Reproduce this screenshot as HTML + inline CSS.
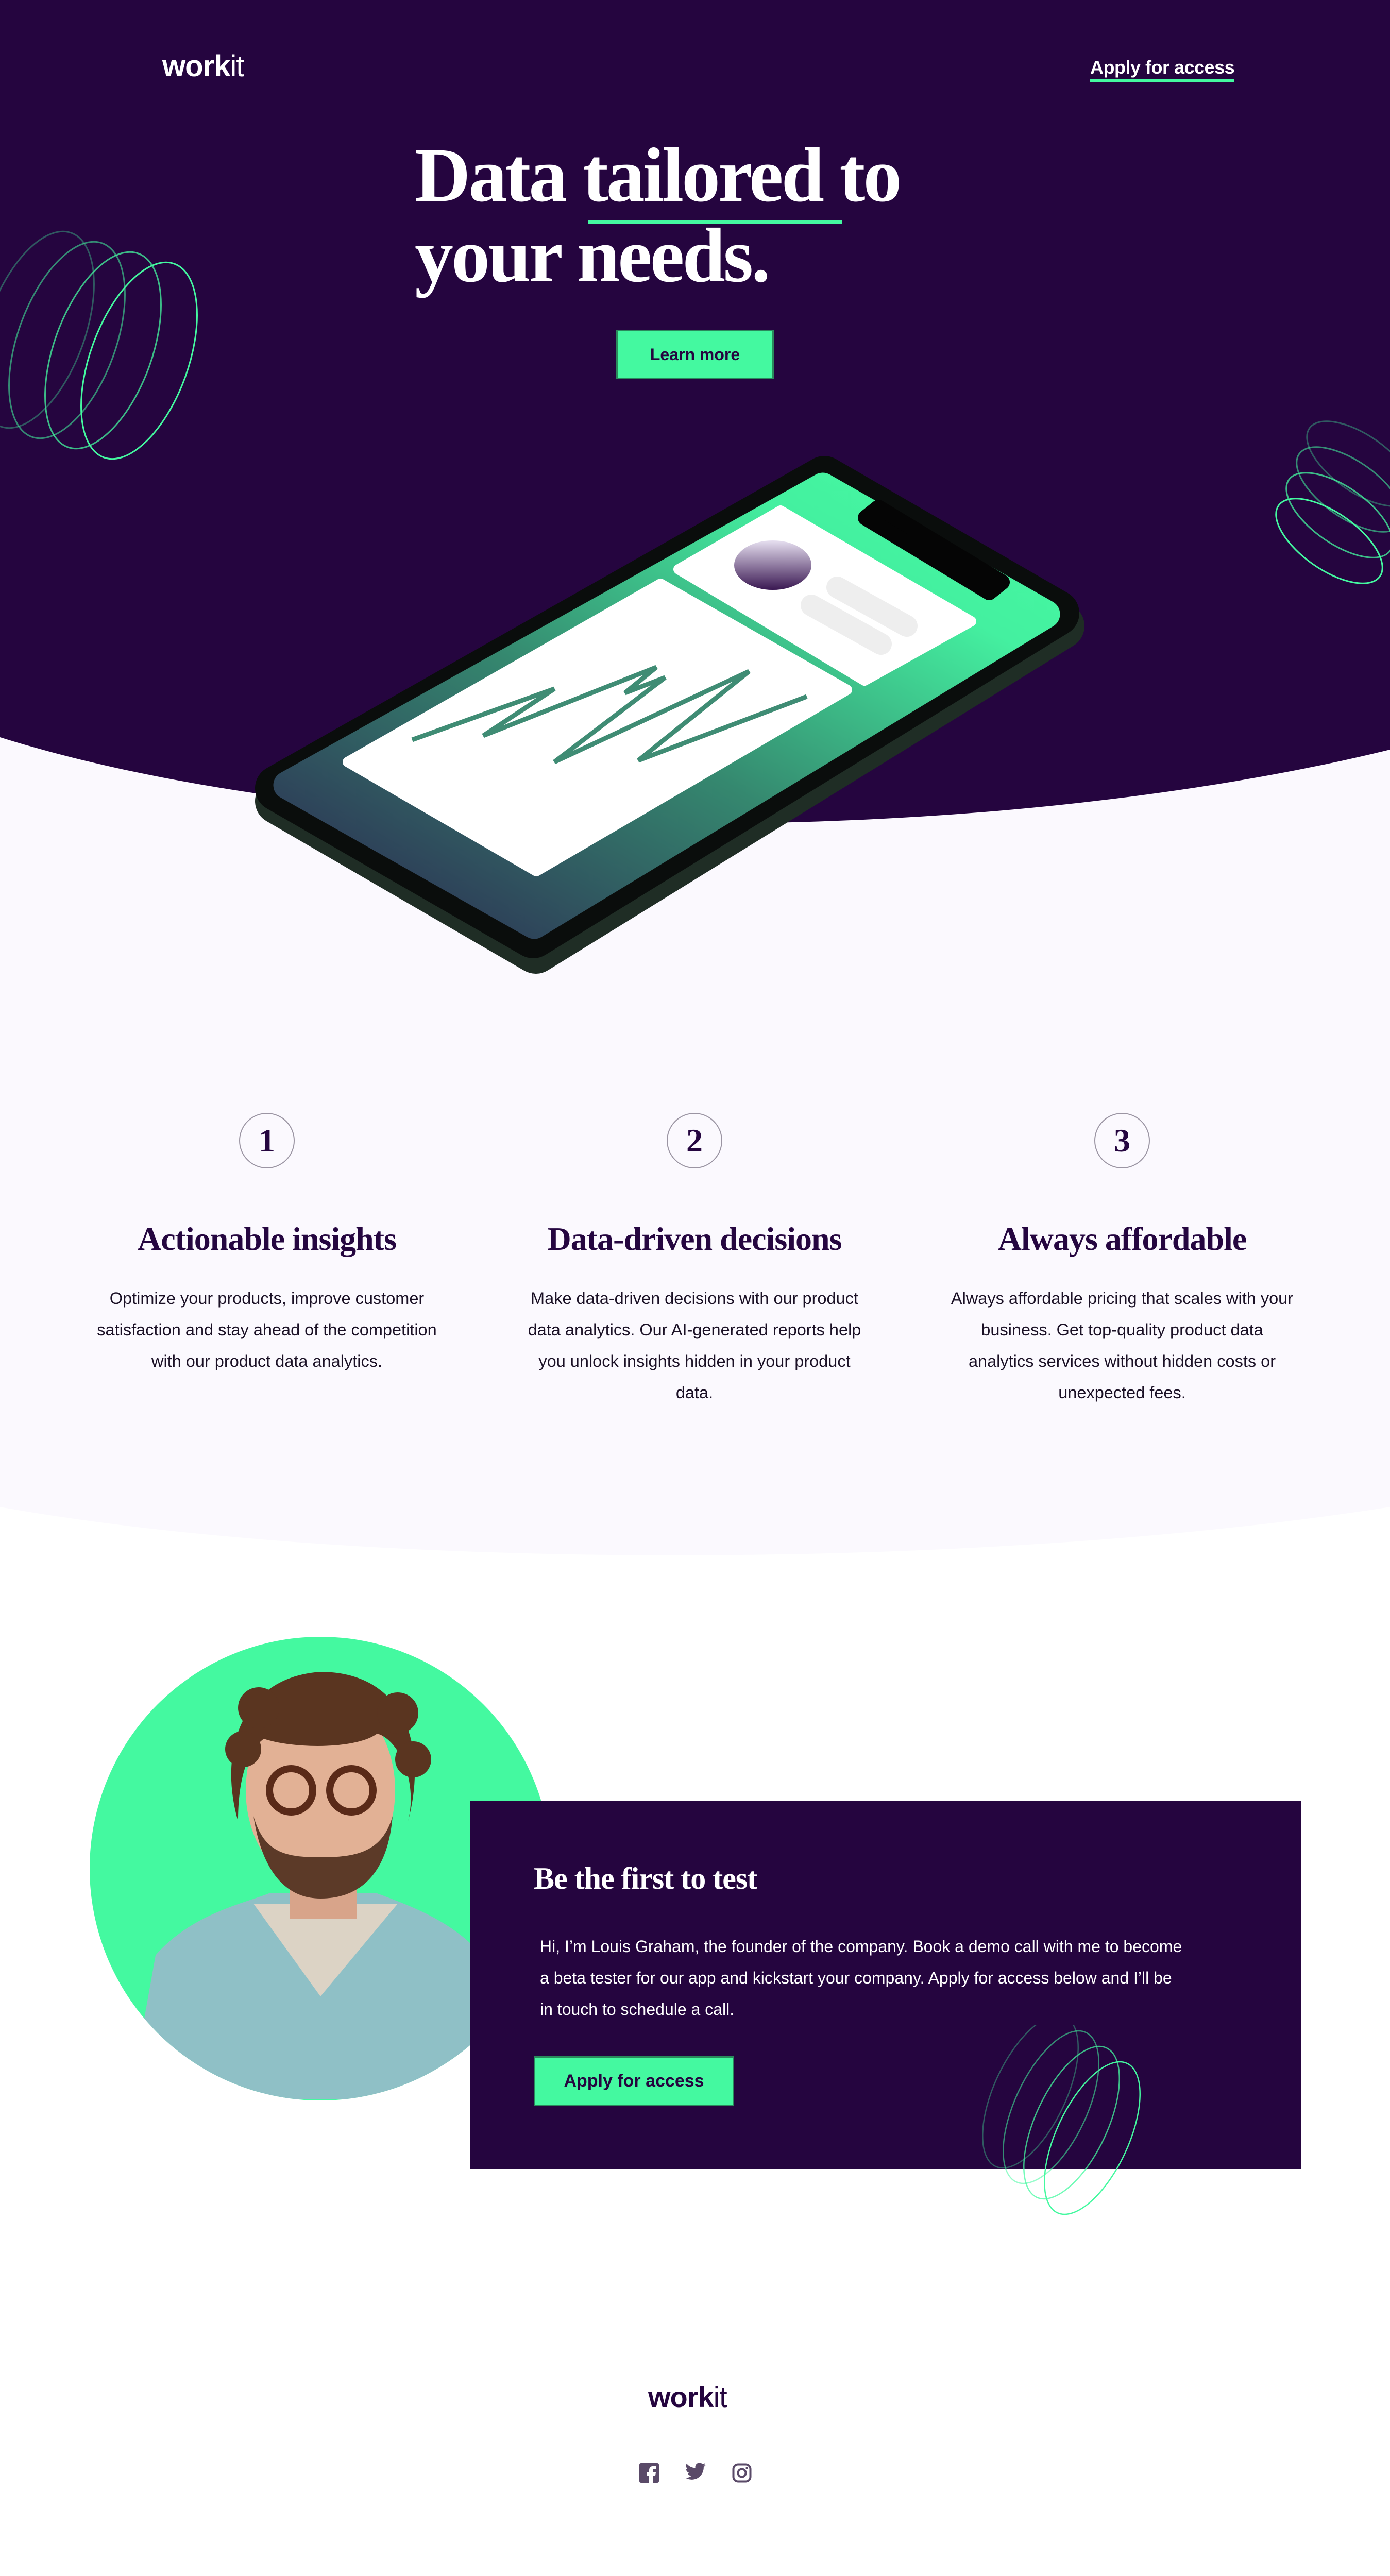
<!DOCTYPE html>
<html><head><meta charset="utf-8">
<style>
*{margin:0;padding:0;box-sizing:border-box}
html,body{width:2698px;height:5041px;background:#fff;overflow:hidden}
body{position:relative;font-family:"Liberation Sans",sans-serif;color:#1b0f2a;max-height:5041px}
.abs{position:absolute}
.serif{font-family:"Liberation Serif",serif}
.logo{font-size:58px;letter-spacing:-1px}
.logo b{font-weight:700}
.logo span{font-weight:400}
.feat{position:absolute;width:760px;text-align:center;top:2160px}
.num{width:108px;height:108px;border:2px solid #9b95a3;border-radius:50%;margin:0 auto;font-family:"Liberation Serif",serif;font-size:64px;line-height:104px;color:#250640;font-weight:700}
.feat h3{font-family:"Liberation Serif",serif;font-size:64px;color:#250640;margin-top:100px;font-weight:700;letter-spacing:-1px;white-space:nowrap}
.feat p{font-size:32.5px;line-height:61px;margin-top:48px;color:#1b1126;white-space:nowrap}
</style></head><body>

<svg class="abs" style="left:0;top:0" width="2698" height="3100">
  <defs>
    <linearGradient id="scr" x1="0" y1="1" x2="1" y2="0">
      <stop offset="0" stop-color="#2b2450"/>
      <stop offset="0.45" stop-color="#35886f"/>
      <stop offset="0.8" stop-color="#44f0a0"/>
      <stop offset="1" stop-color="#46fba2"/>
    </linearGradient>
    <linearGradient id="av" x1="0" y1="0" x2="0" y2="1">
      <stop offset="0" stop-color="#e6dff0"/>
      <stop offset="1" stop-color="#3a1852"/>
    </linearGradient>
  </defs>
  <path d="M0 2925 C700 3050 1900 3050 2698 2925 V1400 H0Z" fill="#fbf9fe"/>
  <path d="M0 0 H2698 V1455 C1900 1650 700 1650 0 1431 Z" fill="#25053f"/>
  <!-- phone side -->
  <polygon points="1600,950 2060,1215 1040,1845 540,1555" fill="#a9bfb2" stroke="#1f2d25" stroke-width="90" stroke-linejoin="round"/>
  <polygon points="1600,930 2050,1190 1035,1815 540,1530" fill="#0a0d0c" stroke="#0a0d0c" stroke-width="90" stroke-linejoin="round"/>
  <polygon points="1597,945 2030,1192 1037,1795 558,1524" fill="url(#scr)" stroke="url(#scr)" stroke-width="55" stroke-linejoin="round"/>
  <!-- notch -->
  <polygon points="1705,985 1945,1130 1920,1150 1680,1005" fill="#050505" stroke="#050505" stroke-width="30" stroke-linejoin="round"/>
  <!-- cards -->
  <polygon points="1282,1133 1644,1339 1041,1691 675,1479" fill="#fff" stroke="#fff" stroke-width="20" stroke-linejoin="round"/>
  <polygon points="1515,991 1885,1206 1678,1321 1317,1105" fill="#fff" stroke="#fff" stroke-width="20" stroke-linejoin="round"/>
  <ellipse cx="1500" cy="1097" rx="75" ry="48" fill="url(#av)"/>
  <line x1="1625" y1="1140" x2="1760" y2="1215" stroke="#eeeeee" stroke-width="42" stroke-linecap="round"/>
  <line x1="1575" y1="1175" x2="1710" y2="1250" stroke="#eeeeee" stroke-width="42" stroke-linecap="round"/>
  <polyline points="800,1436 1076,1337 938,1428 1274,1295 1213,1345 1291,1315 1076,1479 1454,1303 1239,1476 1566,1352" fill="none" stroke="#3f8c74" stroke-width="9" stroke-linejoin="miter"/>
  <!-- spirals left -->
  <g fill="none" stroke="#44f9a0" stroke-width="3">
    <ellipse cx="70" cy="280" rx="95" ry="200" transform="translate(0,360) rotate(20 70 280)" stroke-opacity=".35"/>
    <ellipse cx="130" cy="300" rx="95" ry="200" transform="translate(0,360) rotate(20 130 300)" stroke-opacity=".55"/>
    <ellipse cx="200" cy="320" rx="95" ry="200" transform="translate(0,360) rotate(20 200 320)" stroke-opacity=".75"/>
    <ellipse cx="270" cy="340" rx="95" ry="200" transform="translate(0,360) rotate(20 270 340)"/>
  </g>
  <!-- spirals right -->
  <g fill="none" stroke="#44f9a0" stroke-width="3">
    <ellipse cx="2640" cy="900" rx="120" ry="55" transform="rotate(35 2640 900)" stroke-opacity=".35"/>
    <ellipse cx="2620" cy="950" rx="120" ry="55" transform="rotate(35 2620 950)" stroke-opacity=".55"/>
    <ellipse cx="2600" cy="1000" rx="120" ry="55" transform="rotate(35 2600 1000)" stroke-opacity=".75"/>
    <ellipse cx="2580" cy="1050" rx="120" ry="55" transform="rotate(35 2580 1050)"/>
  </g>
</svg>

<div class="abs logo" style="left:315px;top:95px;color:#fff"><b>work</b><span>it</span></div>
<div class="abs" style="left:2116px;top:110px;color:#fff;font-size:36px;font-weight:700;border-bottom:5px solid #44f9a0;padding-bottom:2px;letter-spacing:-0.5px">Apply for access</div>

<div class="abs serif" style="left:805px;top:262px;color:#fff;font-size:150px;line-height:156px;letter-spacing:-4px;font-weight:700;white-space:nowrap">Data tailored to<br>your needs.</div>
<div class="abs" style="left:1142px;top:427px;width:492px;height:7px;background:#44f9a0"></div>

<div class="abs" style="left:1196px;top:640px;width:306px;height:96px;background:#44f9a0;border:3px solid #2a8a5c;text-align:center;line-height:90px;font-size:32px;font-weight:700;color:#25053f">Learn more</div>

<div class="feat" style="left:138px"><div class="num">1</div><h3>Actionable insights</h3><p>Optimize your products, improve customer<br>satisfaction and stay ahead of the competition<br>with our product data analytics.</p></div>
<div class="feat" style="left:968px"><div class="num">2</div><h3>Data-driven decisions</h3><p>Make data-driven decisions with our product<br>data analytics. Our AI-generated reports help<br>you unlock insights hidden in your product<br>data.</p></div>
<div class="feat" style="left:1798px"><div class="num">3</div><h3>Always affordable</h3><p>Always affordable pricing that scales with your<br>business. Get top-quality product data<br>analytics services without hidden costs or<br>unexpected fees.</p></div>

<!-- portrait circle -->
<svg class="abs" style="left:172px;top:3175px" width="900" height="905">
  <defs><clipPath id="cc"><ellipse cx="450" cy="452" rx="448" ry="450"/></clipPath></defs>
  <ellipse cx="450" cy="452" rx="448" ry="450" fill="#44f9a0"/>
  <g clip-path="url(#cc)">
    <path d="M80 900 L130 620 C200 540 300 520 350 500 L560 500 C640 530 720 560 780 640 L820 900Z" fill="#8fc0c6"/>
    <path d="M320 520 L450 700 L600 520 Z" fill="#dcd3c5"/>
    <rect x="390" y="380" width="130" height="170" fill="#d8a48a"/>
    <ellipse cx="450" cy="300" rx="145" ry="190" fill="#e2b195"/>
    <path d="M290 360 C250 220 300 80 450 70 C610 70 660 210 620 360 C640 280 600 200 560 190 C520 220 400 220 340 200 C300 230 290 300 290 360Z" fill="#5a3520"/>
    <circle cx="300" cy="220" r="35" fill="#5a3520"/><circle cx="330" cy="140" r="40" fill="#5a3520"/><circle cx="600" cy="150" r="40" fill="#5a3520"/><circle cx="630" cy="240" r="35" fill="#5a3520"/>
    <path d="M320 350 C340 480 400 510 450 510 C520 510 580 470 590 350 C570 420 520 430 450 430 C380 430 340 420 320 350Z" fill="#5c3a28"/>
    <circle cx="393" cy="300" r="42" fill="none" stroke="#5a2a18" stroke-width="14"/>
    <circle cx="510" cy="300" r="42" fill="none" stroke="#5a2a18" stroke-width="14"/>
  </g>
</svg>

<div class="abs" style="left:913px;top:3496px;width:1612px;height:714px;background:#25053f"></div>
<svg class="abs" style="left:1880px;top:3930px" width="400" height="380">
  <g fill="none" stroke="#44f9a0" stroke-width="2.5">
    <ellipse cx="120" cy="130" rx="70" ry="160" transform="rotate(25 120 130)" stroke-opacity=".35"/>
    <ellipse cx="160" cy="160" rx="70" ry="160" transform="rotate(25 160 160)" stroke-opacity=".55"/>
    <ellipse cx="200" cy="190" rx="70" ry="160" transform="rotate(25 200 190)" stroke-opacity=".75"/>
    <ellipse cx="240" cy="220" rx="70" ry="160" transform="rotate(25 240 220)"/>
  </g>
</svg>
<div class="abs serif" style="left:1036px;top:3612px;color:#fff;font-size:60px;font-weight:700;letter-spacing:-1px">Be the first to test</div>
<div class="abs" style="left:1048px;top:3748px;color:#fff;font-size:32px;line-height:61px;white-space:nowrap">Hi, I’m Louis Graham, the founder of the company. Book a demo call with me to become<br>a beta tester for our app and kickstart your company. Apply for access below and I’ll be<br>in touch to schedule a call.</div>
<div class="abs" style="left:1036px;top:3991px;width:389px;height:97px;background:#44f9a0;border:3px solid #2a8a5c;text-align:center;line-height:91px;font-size:34px;font-weight:700;color:#25053f">Apply for access</div>

<div class="abs logo" style="left:1258px;top:4620px;color:#25053f;font-size:56px"><b>work</b><span>it</span></div>

<svg class="abs" style="left:1241px;top:4781px" width="38" height="38" viewBox="0 0 38 38"><rect width="38" height="38" rx="3" fill="#5a4a68"/><path d="M26 38V24h5l1-6h-6v-4c0-2 1-3 3-3h3V6c-1 0-3-.3-5-.3-5 0-8 3-8 8V18h-5v6h5v14z" fill="#fff"/></svg>
<svg class="abs" style="left:1330px;top:4780px" width="40" height="34" viewBox="0 0 24 20"><path d="M24 2.4a10 10 0 0 1-2.8.8A5 5 0 0 0 23.3.4a10 10 0 0 1-3.1 1.2A4.9 4.9 0 0 0 11.8 6 14 14 0 0 1 1.7.9a4.9 4.9 0 0 0 1.5 6.6 4.9 4.9 0 0 1-2.2-.6 4.9 4.9 0 0 0 3.9 4.8 4.9 4.9 0 0 1-2.2.1 4.9 4.9 0 0 0 4.6 3.4A9.9 9.9 0 0 1 0 17.3 14 14 0 0 0 7.5 19.5c9.1 0 14-7.5 14-14v-.6A10 10 0 0 0 24 2.4z" fill="#5a4a68"/></svg>
<svg class="abs" style="left:1421px;top:4781px" width="38" height="38" viewBox="0 0 38 38"><rect x="2.5" y="2.5" width="33" height="33" rx="9" fill="none" stroke="#5a4a68" stroke-width="4"/><circle cx="19" cy="19" r="7.5" fill="none" stroke="#5a4a68" stroke-width="4"/><circle cx="28.5" cy="9.5" r="2.2" fill="#5a4a68"/></svg>

</body></html>
